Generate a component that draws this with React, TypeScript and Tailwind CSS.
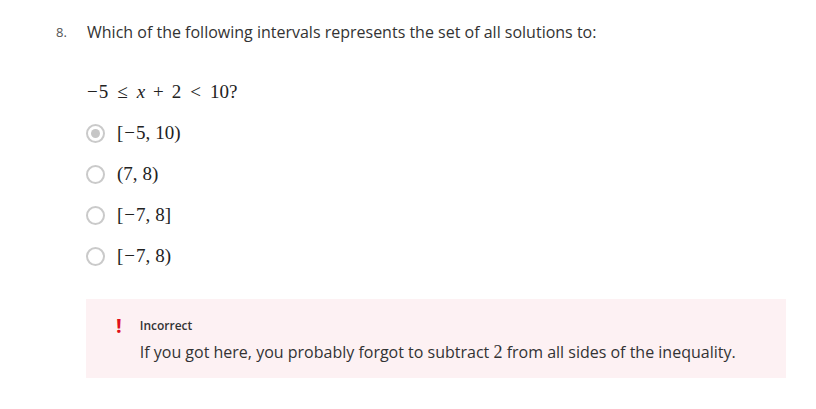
const serif = { fontFamily: '"Liberation Serif", "DejaVu Serif", serif' };

const options = [
  { open: "[", a: "−5", b: "10", close: ")", selected: true },
  { open: "(", a: "7", b: "8", close: ")", selected: false },
  { open: "[", a: "−7", b: "8", close: "]", selected: false },
  { open: "[", a: "−7", b: "8", close: ")", selected: false },
];

function Radio({ selected }: { selected: boolean }) {
  return (
    <span className="flex h-[19px] w-[19px] shrink-0 items-center justify-center rounded-full border-2 border-[#cacaca] bg-white">
      {selected && <span className="h-[9px] w-[9px] rounded-full bg-[#c6c6c6]" />}
    </span>
  );
}

function Interval({ open, a, b, close }: { open: string; a: string; b: string; close: string }) {
  const neg = a.startsWith("−");
  return (
    <span className="text-[19px] leading-[24px] text-[#222]" style={serif}>
      {open}
      {neg && <span className="mx-[1px]">−</span>}
      {neg ? a.slice(1) : a}
      <span className="mr-[5px]">,</span>
      {b}
      {close}
    </span>
  );
}

export default function App() {
  return (
    <div className="h-[409px] w-[816px] bg-white text-[#333]" style={{ fontFamily: '"Open Sans", sans-serif' }}>
      <div className="flex pt-[20px]">
        <span className="box-content w-[31px] pl-[56px] text-[13px] leading-[24px] text-[#555]">8.</span>
        <div className="flex flex-col">
          <p className="text-[16px] leading-[24px]">Which of the following intervals represents the set of all solutions to:</p>
          <p className="mt-[36px] text-[19px] leading-[24px] text-[#222]" style={serif}>
            <span className="mr-[1px]">−</span>5<span className="mx-[9px]">≤</span>
            <i>x</i>
            <span className="mx-[8px]">+</span>2<span className="mx-[9px]">&lt;</span>10?
          </p>
          <div className="mt-[17px] flex flex-col gap-[17px]">
            {options.map((o, i) => (
              <label key={i} className="-ml-[1px] flex h-[24px] items-center gap-[12px]">
                <Radio selected={o.selected} />
                <Interval open={o.open} a={o.a} b={o.b} close={o.close} />
              </label>
            ))}
          </div>
        </div>
      </div>
      <div className="ml-[86px] mt-[31px] flex w-[700px] gap-[18px] bg-[#fdf1f3] pl-[30px] pt-[17px] pb-[14px]">
        <span className="text-[20px] font-bold leading-[20px] text-[#e0101c]">!</span>
        <div className="flex flex-col">
          <span className="text-[12px] font-semibold leading-[20px] text-[#333]">Incorrect</span>
          <span className="mt-[4px] text-[16px] leading-[24px]">
            If you got here, you probably forgot to subtract{" "}
            <span style={serif} className="text-[18px]">2</span> from all sides of the inequality.
          </span>
        </div>
      </div>
    </div>
  );
}
